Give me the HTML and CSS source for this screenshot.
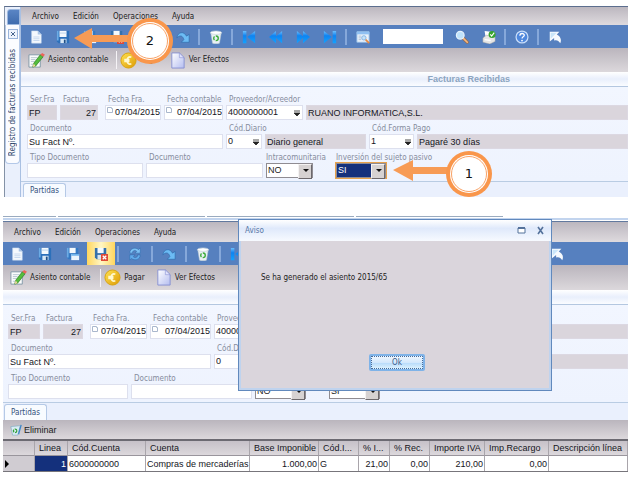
FILE: index.html
```html
<!DOCTYPE html>
<html lang="es">
<head>
<meta charset="utf-8">
<title>Registro de facturas recibidas</title>
<link rel="stylesheet" href="styles.css">
</head>
<body>
<svg class="sprite" aria-hidden="true">
  <defs>
    <linearGradient id="g-blue" x1="0" y1="0" x2="0" y2="1"><stop offset="0" stop-color="#6fbffc"/><stop offset=".4" stop-color="#0f83f0"/><stop offset="1" stop-color="#12a2ff"/></linearGradient>
    <linearGradient id="g-gold" x1="0" y1="0" x2="1" y2="1"><stop offset="0" stop-color="#ffe352"/><stop offset="1" stop-color="#dd9a04"/></linearGradient>
    <linearGradient id="g-sheet" x1="0" y1="0" x2="1" y2="1"><stop offset="0" stop-color="#ffffff"/><stop offset="1" stop-color="#b4bdf0"/></linearGradient>
  </defs>
  <symbol id="i-new" viewBox="0 0 16 16"><path d="M3 1h7l4 4v10H3z" fill="#f4f8fd" stroke="#c4d6ee" stroke-width=".6"/><path d="M10 1v4h4z" fill="#a9c4e6"/><path d="M5 8h7M5 10h7M5 12h7" stroke="#b5cbe8" stroke-width=".8"/></symbol>
  <symbol id="i-save" viewBox="0 0 16 16"><path d="M1 1h14v14H3l-2-2z" fill="#2c70ba"/><path d="M1 1h2v11H1z" fill="#6cabe4"/><path d="M4 1h8v7H4z" fill="#f4f9fd"/><path d="M4 3h8v1H4z" fill="#b5cfe8"/><path d="M5 10h7v5H5z" fill="#d7e7f5"/><path d="M9 11h2v4H9z" fill="#1f4f87"/></symbol>
  <symbol id="i-savenew" viewBox="0 0 16 16"><path d="M1 1h13v13H3l-2-2z" fill="#3479c3"/><path d="M1 1h2v11H1z" fill="#6cabe4"/><path d="M4 1h7v6H4z" fill="#f4f9fd"/><path d="M6 8h9v7H6z" fill="#eaf4fd"/><path d="M6 8h9v2H6z" fill="#70b4ec"/></symbol>
  <symbol id="i-saveclose" viewBox="0 0 16 16"><path d="M1 1h13v13H3l-2-2z" fill="#3570ab"/><path d="M4 1h7v6H4z" fill="#f4f9fd"/><path d="M4 9h5v5H4z" fill="#d8e5f0"/><path d="M8 8h8v8H8z" fill="#df4a36"/><path d="M10 10l4 4m0-4l-4 4" stroke="#fff" stroke-width="1.5"/></symbol>
  <symbol id="i-refresh" viewBox="0 0 16 16"><path d="M2 7c0-6 7-7 10-4l2-2v6H8l2-2C8 3 5 4 5 7z" fill="#7cc0f4" stroke="#2d68a8" stroke-width=".6"/><path d="M14 9c0 6-7 7-10 4l-2 2V9h6l-2 2c2 2 5 1 5-2z" fill="#62aaea" stroke="#2d68a8" stroke-width=".6"/></symbol>
  <symbol id="i-redo" viewBox="0 0 16 16"><path d="M1 9C2 2 9 1 12 7l3-2v9H6l3-3C8 7 5 5 1 9z" fill="#6cbbf4" stroke="#2d68a8" stroke-width=".7"/></symbol>
  <symbol id="i-trash" viewBox="0 0 16 16"><path d="M2 3l2 12c2 1 6 1 8 0l2-12z" fill="#e9f0f4" stroke="#b6c5d0" stroke-width=".6"/><ellipse cx="8" cy="3" rx="6.4" ry="2" fill="#fff" stroke="#c1cdd6" stroke-width=".7"/><circle cx="8" cy="9.500" r="2.600" fill="none" stroke="#3eac3b" stroke-width="1.600" stroke-dasharray="4 1.400"/></symbol>
  <symbol id="i-first" viewBox="0 0 16 16"><path d="M1 1h4v14H1zM15 1v14L6 8z" fill="url(#g-blue)"/></symbol>
  <symbol id="i-prev" viewBox="0 0 16 16"><path d="M8 1v6l7-6v14l-7-6v6L0 8z" fill="url(#g-blue)"/></symbol>
  <symbol id="i-next" viewBox="0 0 16 16"><path d="M8 1v6L1 1v14l7-6v6l8-7z" fill="url(#g-blue)"/></symbol>
  <symbol id="i-last" viewBox="0 0 16 16"><path d="M1 1v14l9-7zM11 1h4v14h-4z" fill="url(#g-blue)"/></symbol>
  <symbol id="i-preview" viewBox="0 0 16 16"><path d="M1 2h14v12H1z" fill="#eaf2fa" stroke="#93bce6"/><path d="M1 2h14v3H1z" fill="#8fc0f2"/><path d="M3 7h3M3 9h3M3 11h3" stroke="#a9bdd6"/><circle cx="9" cy="9" r="2.500" fill="#c5e3fa" stroke="#7fb0e0"/><path d="M11 11l4 4" stroke="#e48945" stroke-width="2"/></symbol>
  <symbol id="i-find" viewBox="0 0 16 16"><path d="M9 9l5 5" stroke="#a5673b" stroke-width="3.400" stroke-linecap="round"/><path d="M9 9l5 5" stroke="#f3ba83" stroke-width="2" stroke-linecap="round"/><circle cx="6" cy="6" r="4.400" fill="#bfe3fb" stroke="#e7f3fc" stroke-width="1.400"/></symbol>
  <symbol id="i-print" viewBox="0 0 16 16"><path d="M3 1l7 1v6H4z" fill="#fff"/><path d="M1 9l4-3 10 2v5l-6 3-8-2z" fill="#e6e6e5" stroke="#999" stroke-width=".5"/><path d="M3 11l7 1" stroke="#fff" stroke-width="1.500"/><circle cx="11.500" cy="5" r="4" fill="#36a52e"/><path d="M9.500 5l1.500 2 3-4" fill="none" stroke="#fff" stroke-width="1.300"/></symbol>
  <symbol id="i-help" viewBox="0 0 16 16"><circle cx="8" cy="8" r="6.800" fill="#4f88dd" stroke="#c9defa" stroke-width="1.400"/><path d="M5.600 6.500c0-3.300 5-3.300 5-.4 0 1.800-2.500 1.600-2.500 3.500" fill="none" stroke="#fff" stroke-width="1.500"/><circle cx="8" cy="12" r="1" fill="#fff"/></symbol>
  <symbol id="i-exit" viewBox="0 0 16 16"><path d="M2 2h11l-3 3c4 2 6 6 4 10-2-3-4-4-7-3V9l-5 4z" fill="#f6fafe"/><path d="M3 3h7L5 8l-2 2z" fill="#c9e6fa"/></symbol>
  <symbol id="i-entry" viewBox="0 0 18 18"><path d="M1 3h12v13H1z" fill="#fbfcfc" stroke="#8298a8"/><path d="M3 6h7M3 8h5M3 10h4M3 13h6" stroke="#a6bac7" stroke-width=".8"/><path d="M13 3l3 2-8 10-3 1 1-4z" fill="#55bd3d" stroke="#2a7b20" stroke-width=".7"/><path d="M13 3l2-2 3 2-2 2z" fill="#ed6459"/><path d="M5 16l1-4 2 3z" fill="#f4d9a4"/></symbol>
  <symbol id="i-euro" viewBox="0 0 18 18"><circle cx="9" cy="9" r="8" fill="url(#g-gold)" stroke="#d9a20c"/><path d="M12 5.500c-6-2-6 9 0 7M4.500 8H10M4.500 10H10" fill="none" stroke="#fff8cf" stroke-width="1.800"/></symbol>
  <symbol id="i-sheet" viewBox="0 0 18 18"><path d="M3 1h8l5 5v11H3z" fill="url(#g-sheet)" stroke="#8790d2"/><path d="M11 1v5h5z" fill="#e0e2fc" stroke="#8790d2" stroke-width=".6"/></symbol>
  <symbol id="i-bin" viewBox="0 0 14 14"><path d="M1 3l2 10h6l3-11z" fill="#d9edf5" stroke="#7ba6bd" stroke-width=".7"/><path d="M13 1l-3 11" stroke="#3c87c9" stroke-width="1.500"/><circle cx="6" cy="8" r="2" fill="none" stroke="#33a038" stroke-width="1.500" stroke-dasharray="3 1"/></symbol>
  <symbol id="i-drop" viewBox="0 0 8 8"><path d="M1 2h6M1 4h6L4 7z" fill="#222" stroke="#222" stroke-width=".8"/></symbol>
  <symbol id="i-cal" viewBox="0 0 8 8"><path d="M1.500 1.500h4v1h1v4h-5z" fill="#fff" stroke="#a9b7cd"/></symbol>
</svg>

<main>
<section class="screen screen-edit">
  <aside class="dock">
    <span class="dock-cap"></span>
    <div class="dock-tab">
      <button class="dock-close" aria-label="Cerrar"><svg viewBox="0 0 8 8"><path d="M2 2l4 4m0-4l-4 4" stroke="#47638c"/></svg></button>
      <span class="dock-title">Registro de facturas recibidas</span>
    </div>
  </aside>
  <div class="app">
    <nav class="menu"><a href="#">Archivo</a><a href="#">Edición</a><a href="#">Operaciones</a><a href="#">Ayuda</a></nav>
    <div class="tools">
      <button aria-label="Nuevo"><svg><use href="#i-new"/></svg></button>
      <button aria-label="Guardar"><svg><use href="#i-save"/></svg></button>
      <button aria-label="Guardar y nuevo"><svg><use href="#i-savenew"/></svg></button>
      <button aria-label="Guardar y cerrar"><svg><use href="#i-saveclose"/></svg></button>
      <i></i>
      <button aria-label="Actualizar"><svg><use href="#i-refresh"/></svg></button>
      <i></i>
      <button aria-label="Rehacer"><svg><use href="#i-redo"/></svg></button>
      <i></i>
      <button aria-label="Borrar"><svg><use href="#i-trash"/></svg></button>
      <i></i>
      <button aria-label="Primero"><svg><use href="#i-first"/></svg></button>
      <button aria-label="Anterior"><svg><use href="#i-prev"/></svg></button>
      <button aria-label="Siguiente"><svg><use href="#i-next"/></svg></button>
      <button aria-label="Último"><svg><use href="#i-last"/></svg></button>
      <i></i>
      <button aria-label="Vista previa"><svg><use href="#i-preview"/></svg></button>
      <input class="search" type="text" aria-label="Buscar">
      <button aria-label="Buscar"><svg><use href="#i-find"/></svg></button>
      <button aria-label="Imprimir"><svg><use href="#i-print"/></svg></button>
      <i></i>
      <button aria-label="Ayuda"><svg><use href="#i-help"/></svg></button>
      <i></i>
      <button aria-label="Salir"><svg><use href="#i-exit"/></svg></button>
    </div>
    <div class="actions">
      <button><svg><use href="#i-entry"/></svg>Asiento contable</button>
      <i></i>
      <button><svg><use href="#i-euro"/></svg>Pagar</button>
      <button><svg><use href="#i-sheet"/></svg>Ver Efectos</button>
    </div>
    <h1 class="band">Facturas Recibidas</h1>
    <form class="form">
      <div class="row row-head">
        <div class="field"><label for="a-ser">Ser.Fra</label><input id="a-ser" value="FP" readonly></div>
        <div class="field"><label for="a-fac">Factura</label><input id="a-fac" class="num" value="27" readonly></div>
        <div class="field apart"><label for="a-ff">Fecha Fra.</label><span class="date"><svg><use href="#i-cal"/></svg><input id="a-ff" value="07/04/2015"></span></div>
        <div class="field"><label for="a-fc">Fecha contable</label><span class="date"><svg><use href="#i-cal"/></svg><input id="a-fc" value="07/04/2015"></span></div>
        <div class="field"><label for="a-pr">Proveedor/Acreedor</label><span class="combo"><input id="a-pr" value="4000000001"><button type="button" aria-label="Elegir proveedor"><svg><use href="#i-drop"/></svg></button></span></div>
        <div class="field"><input aria-label="Nombre del proveedor" value="RUANO INFORMATICA,S.L." readonly></div>
      </div>
      <div class="row row-doc">
        <div class="field"><label for="a-doc">Documento</label><input id="a-doc" value="Su Fact Nº."></div>
        <div class="field"><label for="a-dia">Cód.Diario</label><span class="combo"><input id="a-dia" value="0"><button type="button" aria-label="Elegir diario"><svg><use href="#i-drop"/></svg></button></span></div>
        <div class="field"><input aria-label="Nombre del diario" value="Diario general" readonly></div>
        <div class="field"><label for="a-pag">Cód.Forma Pago</label><span class="combo"><input id="a-pag" value="1"><button type="button" aria-label="Elegir forma de pago"><svg><use href="#i-drop"/></svg></button></span></div>
        <div class="field"><input aria-label="Forma de pago" value="Pagaré 30 días" readonly></div>
      </div>
      <div class="row row-type">
        <div class="field"><label for="a-tip">Tipo Documento</label><input id="a-tip"></div>
        <div class="field"><label for="a-do2">Documento</label><input id="a-do2"></div>
        <div class="field tight"><label for="a-int">Intracomunitaria</label><span class="pick"><select id="a-int"><option>NO</option><option>SI</option></select></span></div>
        <div class="field tight"><label for="a-inv">Inversión del sujeto pasivo</label><span class="pick active"><select id="a-inv"><option>SI</option><option>NO</option></select></span></div>
      </div>
    </form>
    <div class="tabs"><button>Partidas</button></div>
  </div>
  <div class="callout callout-save"><svg viewBox="0 0 100 48"><path d="M0 21L18 11v7h38v7H18v7z" fill="#f79b55"/><circle cx="76" cy="24" r="23" fill="#f9964b"/><circle cx="76" cy="24" r="19" fill="#fff"/><circle cx="76" cy="24" r="17.500" fill="#fff" stroke="#f9a266"/></svg><span>2</span></div>
  <div class="callout callout-field"><svg viewBox="0 0 100 48"><path d="M0 20L20 10v7h36v7H20v7z" fill="#f79b55"/><circle cx="76" cy="24" r="23" fill="#f9964b"/><circle cx="76" cy="24" r="19" fill="#fff"/><circle cx="76" cy="24" r="17.500" fill="#fff" stroke="#f9a266"/></svg><span>1</span></div>
</section>

<section class="screen screen-saved">
  <div class="app">
    <div class="windowtop"><i></i><i></i><i></i><i></i></div>
    <nav class="menu"><a href="#">Archivo</a><a href="#">Edición</a><a href="#">Operaciones</a><a href="#">Ayuda</a></nav>
    <div class="tools">
      <button aria-label="Nuevo"><svg><use href="#i-new"/></svg></button>
      <button aria-label="Guardar"><svg><use href="#i-save"/></svg></button>
      <button aria-label="Guardar y nuevo"><svg><use href="#i-savenew"/></svg></button>
      <button class="hot" aria-label="Guardar y cerrar"><svg><use href="#i-saveclose"/></svg></button>
      <i></i>
      <button aria-label="Actualizar"><svg><use href="#i-refresh"/></svg></button>
      <i></i>
      <button aria-label="Rehacer"><svg><use href="#i-redo"/></svg></button>
      <i></i>
      <button aria-label="Borrar"><svg><use href="#i-trash"/></svg></button>
      <i></i>
      <button aria-label="Primero"><svg><use href="#i-first"/></svg></button>
      <button aria-label="Anterior"><svg><use href="#i-prev"/></svg></button>
      <button aria-label="Siguiente"><svg><use href="#i-next"/></svg></button>
      <button aria-label="Último"><svg><use href="#i-last"/></svg></button>
      <i></i>
      <button aria-label="Vista previa"><svg><use href="#i-preview"/></svg></button>
      <input class="search" type="text" aria-label="Buscar">
      <button aria-label="Buscar"><svg><use href="#i-find"/></svg></button>
      <button aria-label="Imprimir"><svg><use href="#i-print"/></svg></button>
      <i></i>
      <button aria-label="Ayuda"><svg><use href="#i-help"/></svg></button>
      <i></i>
      <button aria-label="Salir"><svg><use href="#i-exit"/></svg></button>
    </div>
    <div class="actions">
      <button><svg><use href="#i-entry"/></svg>Asiento contable</button>
      <i></i>
      <button><svg><use href="#i-euro"/></svg>Pagar</button>
      <button><svg><use href="#i-sheet"/></svg>Ver Efectos</button>
    </div>
    <div class="band"></div>
    <form class="form">
      <div class="row row-head">
        <div class="field"><label for="b-ser">Ser.Fra</label><input id="b-ser" value="FP" readonly></div>
        <div class="field"><label for="b-fac">Factura</label><input id="b-fac" class="num" value="27" readonly></div>
        <div class="field apart"><label for="b-ff">Fecha Fra.</label><span class="date"><svg><use href="#i-cal"/></svg><input id="b-ff" value="07/04/2015"></span></div>
        <div class="field"><label for="b-fc">Fecha contable</label><span class="date"><svg><use href="#i-cal"/></svg><input id="b-fc" value="07/04/2015"></span></div>
        <div class="field"><label for="b-pr">Proveedor/Acreedor</label><span class="combo"><input id="b-pr" value="4000000001"></span></div>
        <div class="field"><input aria-label="Nombre del proveedor" readonly></div>
      </div>
      <div class="row row-doc">
        <div class="field"><label for="b-doc">Documento</label><input id="b-doc" value="Su Fact Nº."></div>
        <div class="field"><label for="b-dia">Cód.Diario</label><span class="combo"><input id="b-dia" value="0"></span></div>
        <div class="field"><input aria-label="Nombre del diario" readonly></div>
        <div class="field"><input aria-label="Código de forma de pago"></div>
        <div class="field"><input aria-label="Forma de pago" readonly></div>
      </div>
      <div class="row row-type">
        <div class="field"><label for="b-tip">Tipo Documento</label><input id="b-tip"></div>
        <div class="field"><label for="b-do2">Documento</label><input id="b-do2"></div>
        <div class="field"><span class="pick"><select aria-label="Intracomunitaria"><option>NO</option><option>SI</option></select></span></div>
        <div class="field"><span class="pick"><select aria-label="Inversión del sujeto pasivo"><option>SI</option><option>NO</option></select></span></div>
      </div>
    </form>
    <div class="tabs"><button>Partidas</button></div>
    <div class="gridbar"><button><svg><use href="#i-bin"/></svg>Eliminar</button></div>
    <table class="lines">
      <colgroup><col class="c-mark"><col class="c-line"><col class="c-code"><col class="c-name"><col class="c-base"><col class="c-tax"><col class="c-pct"><col class="c-tax"><col class="c-vat"><col class="c-sur"><col></colgroup>
      <thead><tr><th></th><th>Linea</th><th>Cód.Cuenta</th><th>Cuenta</th><th>Base Imponible</th><th>Cód.I...</th><th>% I...</th><th>% Rec.</th><th>Importe IVA</th><th>Imp.Recargo</th><th>Descripción línea</th></tr></thead>
      <tbody><tr><td class="mark"><svg viewBox="0 0 6 8"><path d="M1 0l4 4-4 4z"/></svg></td><td class="num chosen">1</td><td>6000000000</td><td>Compras de mercaderías</td><td class="num">1.000,00</td><td>G</td><td class="num">21,00</td><td class="num">0,00</td><td class="num">210,00</td><td class="num">0,00</td><td></td></tr></tbody>
    </table>
  </div>
  <div class="dialog" role="dialog" aria-labelledby="dlg-title">
    <header><h2 id="dlg-title">Aviso</h2><button aria-label="Maximizar"><svg viewBox="0 0 9 9"><path d="M1 2h7v5H1z" fill="#fff" stroke="#55729b"/><path d="M1 2h7" stroke="#55729b" stroke-width="2"/></svg></button><button aria-label="Cerrar"><svg viewBox="0 0 9 9"><path d="M2 1l5 7M7 1L2 8" stroke="#55729b" stroke-width="1.600"/></svg></button></header>
    <div class="dialog-body"><p>Se ha generado el asiento 2015/65</p><button class="ok">Ok</button></div>
  </div>
</section>
</main>
</body>
</html>
```

FILE: styles.css
```css
* { box-sizing: border-box; }

:root {
  --ui: "DejaVu Sans Condensed", "DejaVu Sans", sans-serif;
  --data: "Liberation Sans", sans-serif;
  --grey: #dad5dc;
  --blue: #5680bf;
}

body {
  margin: 0;
  padding: 6px 4px 8px;
  background: #fff;
  color: #1c1c22;
  font: 8px/12px var(--ui);
}

button, input, select { font: inherit; color: inherit; margin: 0; padding: 0; border: 0; border-radius: 0; background: none; }
h1, h2, p { margin: 0; }
svg { display: block; flex: none; }
.sprite { position: absolute; width: 0; height: 0; }

.screen { position: relative; }
.screen-edit { display: flex; border-top: 1px solid #5c6e8e; border-left: 1px solid #8492a6; }
.screen-saved { margin: 19px 0 0 -1px; }
.app { flex: 1; min-width: 0; }

/* Docked side tab */
.dock { display: flex; flex-direction: column; width: 16px; background: #eaf0fc; border-right: 1px solid #a9c0e2; }
.dock-cap { height: 16px; margin: 2px 0 0 2px; border-radius: 3px 0 0 0; background: linear-gradient(#5a85c4, #3f6cae); border: 1px solid #9db8de; }
.dock-tab { display: flex; flex-direction: column; align-items: center; gap: 10px; height: 139px; padding-top: 4px; background: #fbfcff; border: 1px solid #b3c8e8; border-top: 0; border-radius: 0 0 4px 4px; }
.dock-close { width: 10px; height: 10px; border: 1px solid #9ab4da; background: #edf3fd; }
.dock-title { writing-mode: vertical-rl; transform: rotate(180deg); white-space: nowrap; color: #2d4468; line-height: 12px; }

/* Bars */
.menu { display: flex; align-items: center; gap: 14px; height: 18px; padding: 2px 0 0 11px; background: linear-gradient(#bcb7bf, #dedade); }
.menu a { color: inherit; text-decoration: none; }
.tools { display: flex; align-items: center; height: 23px; padding-left: 1px; background: var(--blue); }
.tools button { display: grid; place-items: center; width: 27px; height: 23px; }
.tools button svg { width: 14px; height: 14px; }
.tools i { width: 2px; height: 16px; margin: 0 2px; background: #86a8da; }
.tools .search { width: 60px; height: 15px; margin: 0 5px 0 7px; background: #fff; }
.tools .hot { background: linear-gradient(90deg, #ffd65e, #fff6c4, #ffd65e); }
.actions { display: flex; align-items: center; height: 24px; padding-left: 7px; background: linear-gradient(#bab5bd, #dcd8dc); }
.actions button { display: flex; align-items: center; gap: 3px; margin-right: 8px; white-space: nowrap; }
.actions svg { width: 17px; height: 17px; }
.actions i { width: 1px; height: 18px; margin-right: 3px; background: #f5f3f6; }
.band { height: 15px; padding-right: 118px; text-align: right; background: linear-gradient(#fff, #e9effc 50%, #fafcff); border-bottom: 1px solid #b4c7e0; color: #8ba4c0; font: bold 9px/14px var(--data); }

/* Form */
.form { padding: 7px 0 3px 6px; background: linear-gradient(#f2f6ff, #eef3fe); border-bottom: 1px solid #b9cce3; display: grid; gap: 3px; }
.row { display: grid; column-gap: 3px; align-items: end; }
.row-head { grid-template-columns: 30px 38px 60px 59px 77px 1fr; }
.row-doc { grid-template-columns: 196px 36px 101px 45px 1fr; }
.row-type { grid-template-columns: 116px 117px 47px 50px; }
.field { display: flex; flex-direction: column; min-width: 0; }
.field.apart { margin-left: 4px; }
.field label { padding-left: 3px; line-height: 11px; white-space: nowrap; color: #868c9d; }
.field.tight label { padding-left: 0; }
.field input { width: 100%; height: 15px; padding: 0 1px; background: #fff; border: 1px solid #dde0ee; font: 9px/13px var(--data); color: #15151c; }
.field input:read-only { background: var(--grey); border-color: #dcd8e2; }
.field .num { text-align: right; }
.date, .combo { display: flex; align-items: center; height: 15px; background: #fff; border: 1px solid #dde0ee; }
.date input, .combo input { flex: 1; min-width: 0; height: 13px; border: 0; padding: 0 1px; background: none; }
.date input { text-align: right; padding: 0; }
.date svg { width: 8px; height: 8px; align-self: start; }
.combo svg { width: 8px; height: 8px; margin-right: 1px; }
.pick { position: relative; display: block; height: 15px; background: #fff; border: 1px solid #8f8c92; }
.pick select { appearance: none; display: block; width: 100%; height: 13px; padding: 0 1px; font: 9px/13px var(--data); }
.pick::before { content: ""; position: absolute; top: 0; right: 0; width: 12px; height: 13px; background: #d6d2d2; border: 1px solid; border-color: #f4f2f2 #6c686c #6c686c #f4f2f2; pointer-events: none; }
.pick::after { content: ""; position: absolute; top: 5px; right: 3px; border: 3px solid transparent; border-top-color: #111; border-bottom: 0; pointer-events: none; }
.pick.active { outline: 1px solid #e8a24c; }
.pick.active select { background: #14307c; color: #fff; }
.row-type .field:last-child { margin-left: 20px; margin-right: -20px; }

.tabs { height: 15px; padding: 1px 0 0 2px; background: #eaf0fd; }
.tabs button { display: block; height: 14px; padding: 0 6px; background: #f8fbff; border: 1px solid #b5c9e6; border-bottom: 0; border-radius: 3px 3px 0 0; color: #33507c; }

/* Numbered callouts */
.callout { position: absolute; width: 100px; height: 48px; }
.callout svg { width: 100px; height: 48px; }
.callout span { position: absolute; top: 14px; left: 66px; width: 20px; text-align: center; font: 13px/20px "DejaVu Sans", sans-serif; color: #111; }
.callout-save { top: 10px; left: 69px; }
.callout-field { top: 143px; left: 388px; }

/* Saved state window */
.windowtop { display: flex; gap: 2px; height: 6px; border-bottom: 1px solid #62799e; background: linear-gradient(#fff 2px, #c2d4ee 2px, #c2d4ee 4px, #fff 4px); }
.windowtop i { flex: none; width: 147px; height: 1px; background: #9aabc0; }
.windowtop i:first-child { width: 53px; }
.screen-saved .menu { height: 20px; }
.screen-saved .tools { padding-left: 0; }
.screen-saved .tools button { width: 28px; }
.screen-saved .tools .search { width: 66px; }
.screen-saved .actions { height: 25px; }
.screen-saved .actions button { margin-right: 10px; }
.screen-saved .form { padding: 8px 0 3px 5px; gap: 4px; }
.screen-saved .row-head { grid-template-columns: 32px 40px 61px 61px 81px 1fr; }
.screen-saved .row-doc { grid-template-columns: 203px 37px 104px 46px 1fr; }
.screen-saved .row-type { grid-template-columns: 120px 121px 51px 51px; }
.screen-saved .tabs { height: 17px; padding-left: 1px; }
.screen-saved .tabs button { height: 16px; }
.gridbar { display: flex; align-items: center; height: 21px; padding-left: 7px; background: linear-gradient(#bab5bd, #dcd8dc); border-bottom: 2px solid #6c6a72; }
.gridbar button { display: flex; align-items: center; gap: 2px; font: 9px/12px var(--data); }
.gridbar svg { width: 12px; height: 12px; }

.lines { width: 100%; table-layout: fixed; border-collapse: separate; border-spacing: 0; border-bottom: 1px solid #77757b; font: 9px/14px var(--data); color: #15151c; }
.lines th, .lines td { height: 15px; padding: 0 1px; overflow: hidden; white-space: nowrap; text-align: left; font-weight: normal; border-right: 1px solid #a9a5ab; }
.lines th { padding-left: 4px; padding-right: 0; background: linear-gradient(#c6c1c8, #dcd8dc); border-bottom: 1px solid #99959c; }
.lines td { background: #fff; }
.lines .num { text-align: right; }
.lines .mark { background: #d0ccd2; }
.lines .mark svg { width: 6px; height: 8px; }
.lines .chosen { background: #14307c; color: #fff; }
.c-mark { width: 32px; }
.c-line { width: 33px; }
.c-code { width: 78px; }
.c-name { width: 104px; }
.c-base { width: 69px; }
.c-tax { width: 40px; }
.c-pct { width: 31px; }
.c-vat { width: 55px; }
.c-sur { width: 64px; }

/* Message box */
.dialog { position: absolute; top: 3px; left: 235px; width: 314px; display: flex; flex-direction: column; border: 1px solid #6189bd; background: #bfd3ee; padding: 0 2px 2px; }
.dialog header { display: flex; align-items: center; gap: 10px; height: 21px; margin: 0 -2px; padding: 0 6px; background: linear-gradient(#fff, #dfe9fb 40%, #f7faff); }
.dialog h2 { flex: 1; font: 8px/12px var(--ui); color: #5877a6; }
.dialog header svg { width: 9px; height: 9px; }
.dialog-body { display: flex; flex-direction: column; height: 147px; padding: 31px 16px 17px 20px; background: var(--grey); }
.ok { align-self: center; width: 56px; height: 17px; margin-top: auto; border: 2px solid #7fb3e8; border-radius: 2px; background: linear-gradient(#f0f7ff, #d3e8fc 50%, #b4d9fa 50%, #e2f5ff); color: #3c5b88; outline-offset: -3px; outline: 1px dotted #4a6c98; }
```
